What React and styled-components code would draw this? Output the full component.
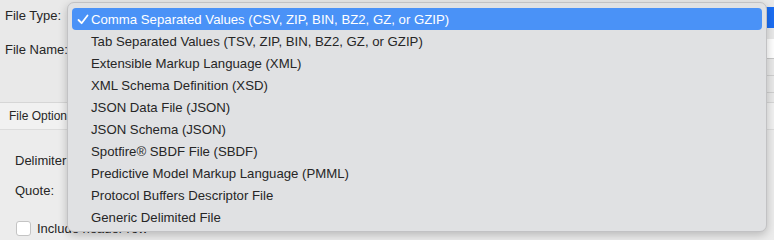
import React from "react";
import styled, { createGlobalStyle } from "styled-components";

const Global = createGlobalStyle`
  html, body { margin: 0; padding: 0; }
  body {
    width: 774px; height: 240px; overflow: hidden;
    background: #ececec;
    font-family: "Liberation Sans", Arial, sans-serif;
    font-size: 13px; color: #262626;
    -webkit-font-smoothing: antialiased;
  }
`;

const Page = styled.div`
  position: relative;
  width: 774px;
  height: 240px;
  overflow: hidden;
`;

const TopPanel = styled.div`
  height: 103px;
  background: #e9e9e9;
  border-bottom: 1px solid #d6d6d6;
  display: flex;
  flex-direction: column;
  padding: 5px 0 0 5px;
  box-sizing: border-box;
`;

const FormRow = styled.div`
  display: flex;
  align-items: center;
  height: ${(p) => p.$h}px;
  margin-bottom: ${(p) => p.$mb || 0}px;
`;

const Label = styled.span`
  width: ${(p) => p.$w}px;
  flex: none;
  color: #262626;
`;

const SelectBox = styled.div`
  flex: 1;
  height: 21px;
  border-radius: 5px;
  background: #1b6ef3;
  margin-right: -10px;
  margin-top: 4px;
`;

const TextField = styled.div`
  flex: 1;
  height: 19px;
  background: #ffffff;
  border-bottom: 1px solid #c8c8c8;
  margin-right: -10px;
`;

const ButtonGhost = styled.div`
  width: 30px;
  height: 16px;
  border: 1px solid #cfcfcf;
  border-radius: 5px;
  margin-left: auto;
  margin-right: -14px;
`;

const TabBar = styled.div`
  height: 26px;
  background: #f1f1f1;
  border-bottom: 1px solid #dcdcdc;
  display: flex;
  align-items: center;
  padding-left: 9px;
  font-size: 12px;
`;

const Content = styled.div`
  padding: 21px 0 0 15px;
  display: flex;
  flex-direction: column;
`;

const CheckRow = styled.div`
  display: flex;
  align-items: center;
  gap: 6px;
  margin-left: 1px;
  margin-top: 10px;
`;

const Check = styled.span`
  width: 15px;
  height: 15px;
  border-radius: 3px;
  background: #fff;
  border: 1px solid #c4c4c4;
  box-sizing: border-box;
`;

const Menu = styled.div`
  position: absolute;
  left: 67px;
  top: 2px;
  width: 700px;
  height: 230px;
  box-sizing: border-box;
  padding: 5px 4px;
  background: #e0e1e3;
  border: 1px solid #c2c2c4;
  border-radius: 7px;
  box-shadow: 0 3px 10px rgba(0, 0, 0, 0.22);
  display: flex;
  flex-direction: column;
`;

const Item = styled.div`
  height: 22px;
  flex: none;
  display: flex;
  align-items: center;
  border-radius: 4px;
  padding-left: 5px;
  font-size: 13.2px;
  background: ${(p) => (p.$active ? "#4a92f7" : "transparent")};
  color: ${(p) => (p.$active ? "#ffffff" : "#262626")};
  white-space: nowrap;
`;

const Tick = styled.span`
  width: 14px;
  flex: none;
  display: flex;
  align-items: center;
`;

const items = [
  "Comma Separated Values (CSV, ZIP, BIN, BZ2, GZ, or GZIP)",
  "Tab Separated Values (TSV, ZIP, BIN, BZ2, GZ, or GZIP)",
  "Extensible Markup Language (XML)",
  "XML Schema Definition (XSD)",
  "JSON Data File (JSON)",
  "JSON Schema (JSON)",
  "Spotfire® SBDF File (SBDF)",
  "Predictive Model Markup Language (PMML)",
  "Protocol Buffers Descriptor File",
  "Generic Delimited File",
];

export default function App() {
  return (
    <Page>
      <Global />
      <TopPanel>
        <FormRow $h={21} $mb={13}>
          <Label $w={70}>File Type:</Label>
          <SelectBox />
        </FormRow>
        <FormRow $h={20} $mb={16}>
          <Label $w={70}>File Name:</Label>
          <TextField />
        </FormRow>
        <FormRow $h={18}>
          <ButtonGhost />
        </FormRow>
      </TopPanel>
      <TabBar>File Options</TabBar>
      <Content>
        <FormRow $h={18} $mb={12}>
          <Label $w={70}>Delimiter:</Label>
        </FormRow>
        <FormRow $h={18} $mb={12}>
          <Label $w={70}>Quote:</Label>
        </FormRow>
        <CheckRow>
          <Check />
          <span>Include header row</span>
        </CheckRow>
      </Content>
      <Menu>
        {items.map((t, i) => (
          <Item key={t} $active={i === 0}>
            <Tick>
              {i === 0 && (
                <svg width="12" height="11" viewBox="0 0 12 11">
                  <path d="M1.5 6 L4.6 9.2 L10.5 1.5" fill="none" stroke="#fff" strokeWidth="1.8" strokeLinecap="round" strokeLinejoin="round" />
                </svg>
              )}
            </Tick>
            {t}
          </Item>
        ))}
      </Menu>
    </Page>
  );
}
